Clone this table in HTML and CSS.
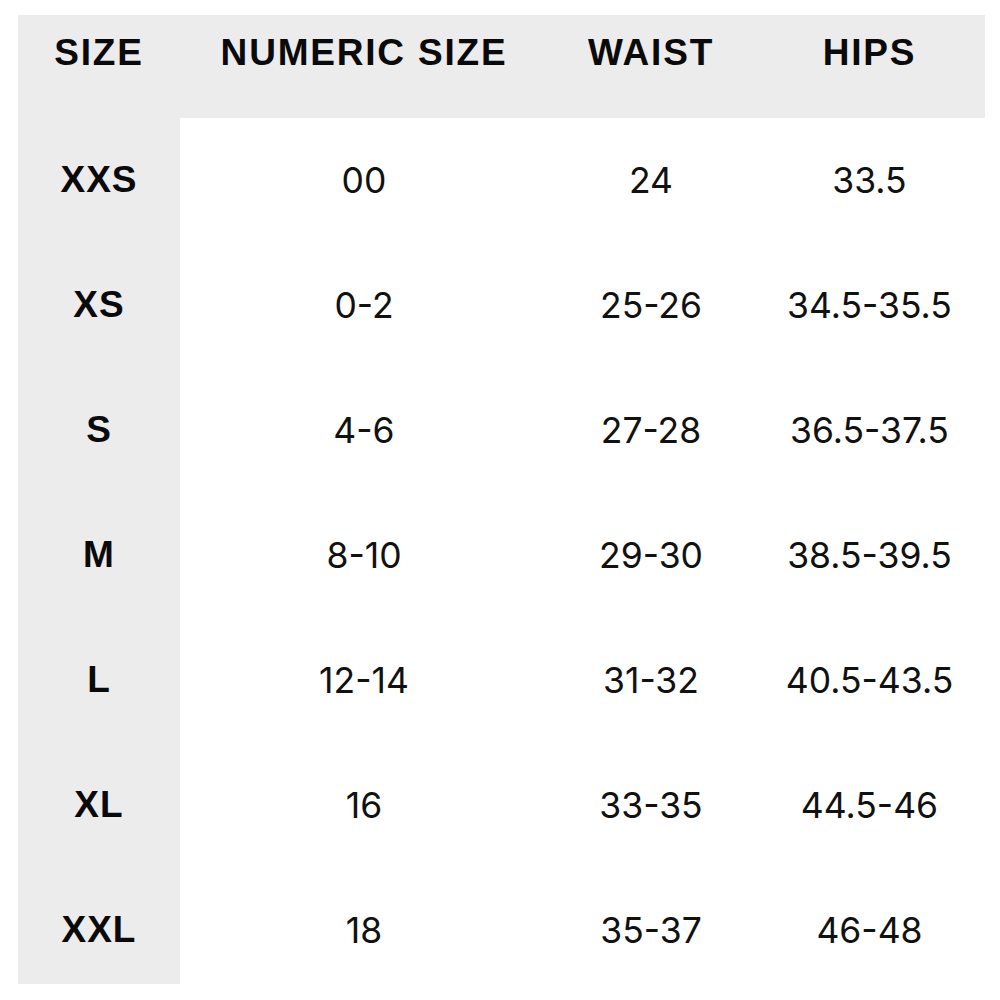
FILE: index.html
```html
<!DOCTYPE html>
<html>
<head>
<meta charset="utf-8">
<link rel="stylesheet" href="styles.css">
</head>
<body>
<div class="chart">
  <div class="cell head side">SIZE</div>
  <div class="cell head">NUMERIC SIZE</div>
  <div class="cell head">WAIST</div>
  <div class="cell head">HIPS</div>

  <div class="cell side">XXS</div><div class="cell">00</div><div class="cell">24</div><div class="cell">33.5</div>
  <div class="cell side">XS</div><div class="cell">0-2</div><div class="cell">25-26</div><div class="cell">34.5-35.5</div>
  <div class="cell side">S</div><div class="cell">4-6</div><div class="cell">27-28</div><div class="cell">36.5-37.5</div>
  <div class="cell side">M</div><div class="cell">8-10</div><div class="cell">29-30</div><div class="cell">38.5-39.5</div>
  <div class="cell side">L</div><div class="cell">12-14</div><div class="cell">31-32</div><div class="cell">40.5-43.5</div>
  <div class="cell side">XL</div><div class="cell">16</div><div class="cell">33-35</div><div class="cell">44.5-46</div>
  <div class="cell side last">XXL</div><div class="cell last">18</div><div class="cell last">35-37</div><div class="cell last">46-48</div>
</div>
</body>
</html>
```

FILE: styles.css
```css
html, body {
  margin: 0;
  padding: 0;
  background: #ffffff;
}
body {
  padding: 15px 0 0 18px;
  font-family: Inter, "Liberation Sans", sans-serif;
  color: #111111;
}
.chart {
  display: grid;
  width: 967px;
  grid-template-columns: 162px 368px 206px 231px;
  grid-template-rows: 103px repeat(6, 125px) 116px;
}
.cell {
  display: flex;
  align-items: center;
  justify-content: center;
  font-size: 35.5px;
  font-weight: 400;
  padding-bottom: 1px;
}
.cell.last {
  padding-top: 8px;
  padding-bottom: 0;
}
.side {
  background: #ececec;
  font-family: "Liberation Sans", Arial, sans-serif;
  font-weight: 700;
  font-size: 37px;
  letter-spacing: 1px;
  color: #0a0a0a;
}
.head {
  background: #ececec;
  font-family: "Liberation Sans", Arial, sans-serif;
  font-weight: 700;
  font-size: 37px;
  letter-spacing: 1.8px;
  padding-bottom: 27px;
  color: #0a0a0a;
}
```
